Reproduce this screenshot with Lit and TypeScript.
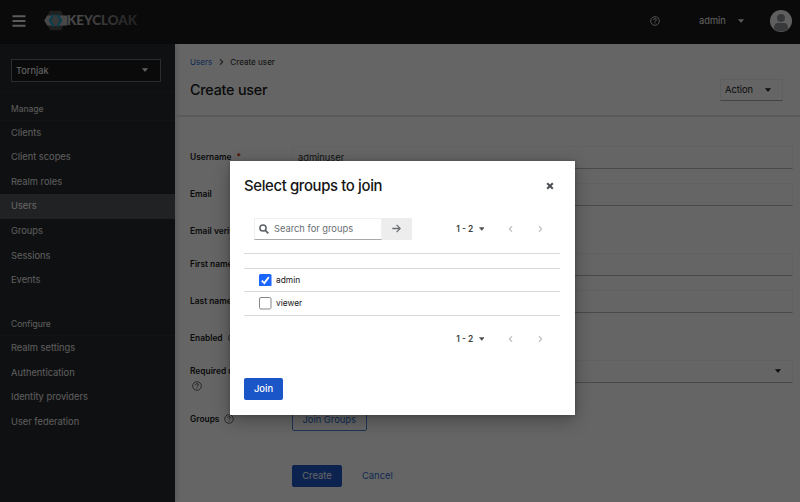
import { LitElement, html, css } from "lit";
import { customElement } from "lit/decorators.js";
import { classMap } from "lit/directives/class-map.js";

const caret = html`<svg class="caret" viewBox="0 0 6 4"><path d="M.4.4h5.2L3 3.5z" fill="currentColor" stroke="currentColor" stroke-width=".5" stroke-linejoin="round"/></svg>`;
const help = html`<svg class="help" viewBox="0 0 10 10" fill="none" stroke="currentColor"><circle cx="5" cy="5" r="4.3" stroke-width=".85"/><path d="M3.6 4.1c0-1 .6-1.5 1.4-1.5s1.4.5 1.4 1.2c0 .9-1.4 1-1.4 1.9M5 6.5v.9" stroke-width=".95"/></svg>`;
const chevron = (d: string) => html`<svg class="chev" viewBox="0 0 5 8" fill="none" stroke="currentColor" stroke-width="1.3"><path d=${d}/></svg>`;
const left = chevron("M4 1.2L1.4 4 4 6.8");
const right = chevron("M1 1.2L3.6 4 1 6.8");

interface Row { label: string; kind: string; h: string; req?: boolean; help?: boolean; value?: string }
const rows: Row[] = [
  { label: "Username", kind: "input", h: "h37", req: true, value: "adminuser" },
  { label: "Email", kind: "input", h: "h37" },
  { label: "Email verified", kind: "none", h: "h33" },
  { label: "First name", kind: "input", h: "h37" },
  { label: "Last name", kind: "input", h: "h37" },
  { label: "Enabled", kind: "none", h: "h33", help: true },
  { label: "Required user actions", kind: "select", h: "h48", help: true },
  { label: "Groups", kind: "join", h: "h56", help: true },
];

@customElement("app-root")
export class AppRoot extends LitElement {
  static styles = css`
    :host { display: block; position: relative; width: 800px; height: 502px; overflow: hidden; font-family: Inter, "Liberation Sans", sans-serif; font-size: 9.3px; color: #151515; background: #fff; }
    * { box-sizing: border-box; }
    svg { display: block; flex: none; }
    .caret { width: 6px; height: 4px; }
    .help { width: 10px; height: 10px; }
    .chev { width: 5px; height: 8px; }
    header { height: 44px; background: #151515; color: #f0f0f0; display: flex; align-items: center; padding: 0 8px 3px 12px; }
    .burger { width: 14px; height: 12px; }
    .logo { width: 96px; height: 22px; margin-left: 17px; }
    .wordmark { font: 900 13px Lato, sans-serif; }
    .tools { margin-left: auto; display: flex; align-items: center; }
    .user { margin: 0 12px 0 39px; width: 27px; }
    .avatar { width: 22px; height: 22px; margin-left: 26px; }
    .account { display: flex; align-items: center; }
    .body { display: flex; height: 458px; }
    nav { width: 175px; background: #212427; color: #e8e8e8; flex: none; box-shadow: 2px 0 5px rgba(3,3,3,.15); }
    .realm { height: 47.5px; padding: 15px 14.5px 0 11px; border-bottom: 1px solid #2b2e31; }
    .picker { height: 22.5px; border: 1px solid #6a6e73; background: #151515; display: flex; align-items: center; justify-content: space-between; padding: 0 11.5px 0 4px; color: #fff; }
    .section { font-size: 8.5px; height: 29px; padding-left: 11px; line-height: 34px; border-bottom: 1px solid #2b2e31; }
    .section.second { height: 43px; line-height: 62px; }
    .item { height: 24.65px; line-height: 24.8px; padding-left: 11px; white-space: nowrap; }
    .item.current { background: #4f5255; color: #fff; }
    main { flex: 1; }
    .top { height: 73px; border-bottom: 2px solid #e2e2e2; padding: 12.5px 17px 0 15px; }
    .crumbs { display: flex; align-items: center; height: 11px; font-size: 8.1px; gap: 6.5px; }
    .crumbs .chev { color: #5a5d60; }
    .link { color: #2468cc; }
    .headline { display: flex; justify-content: space-between; align-items: center; height: 23px; margin-top: 10.5px; }
    h1, h2 { margin: 0; font-weight: 500; white-space: nowrap; letter-spacing: -.2px; }
    h1 { font-size: 14.3px; }
    .action { width: 63px; height: 22px; border: 1px solid #f0f0f0; border-bottom-color: #a5a7a9; display: flex; align-items: center; justify-content: space-between; padding: 0 11px 0 4px; }
    form { padding: 29px 7.5px 0 15px; }
    .row { display: grid; grid-template-columns: 102px 1fr; align-items: start; }
    .h37 { height: 37px; } .h33 { height: 33px; } .h48 { height: 48px; } .h56 { height: 56.5px; }
    .label { font-weight: 600; font-size: 8.4px; line-height: 22px; display: flex; flex-wrap: wrap; column-gap: 5px; white-space: nowrap; }
    .label .help { margin-top: 6px; color: #45484b; }
    .wrapped .help { margin: -1px 0 0 2px; }
    .req { color: #c9190b; }
    .field { height: 22.5px; border: 1px solid #f4f4f4; border-bottom-color: #b4b6b8; display: flex; align-items: center; padding: 0 11px 0 5px; color: #2c2e30; }
    .select { justify-content: flex-end; color: #151515; }
    .btn { display: inline-flex; height: 22.5px; align-items: center; justify-content: center; border-radius: 2px; font-size: 9.4px; }
    .outline { width: 74.5px; border: 1px solid #4a82d8; color: #2468cc; }
    .primary { background: #1b56c8; color: #fff; }
    .create { width: 50px; margin-right: 20px; }
    .submit { padding-left: 102px; display: flex; }
    .backdrop { position: absolute; inset: 0; background: rgba(3,3,3,.61); }
    .modal { position: absolute; left: 229.5px; top: 161px; width: 345.3px; height: 253.5px; background: #fff; padding: 14px 14.5px; box-shadow: 0 5px 16px rgba(3,3,3,.3), 0 0 4px rgba(3,3,3,.2); }
    .mhead { display: flex; height: 22px; align-items: center; justify-content: space-between; }
    h2 { font-size: 14.9px; letter-spacing: -.36px; }
    .close { width: 8px; height: 8px; margin-right: 6px; color: #4a4e52; }
    .toolbar { display: flex; margin-top: 20.5px; padding-left: 10px; height: 22.5px; }
    .search { width: 128px; border: 1px solid #f0f0f0; border-bottom-color: #a8aaac; display: flex; align-items: center; gap: 5px; padding-left: 4px; color: #6a6e73; }
    .glass { width: 10px; height: 10px; color: #5c6064; }
    .go { width: 29.5px; background: #ededed; display: flex; align-items: center; justify-content: center; color: #6a6e73; }
    .arrow { width: 9px; height: 9px; }
    .pager { display: flex; align-items: center; margin-left: auto; padding-right: 17.5px; color: #c4c4c4; }
    .range { font-weight: 600; font-size: 8.4px; color: #3c3f42; width: 22.5px; white-space: nowrap; }
    .pager .caret { color: #4a4e52; margin-right: 24px; width: 5.5px; }
    .next { margin-left: 24.5px; }
    .list { margin-top: 12.5px; border-top: 1px solid #dadada; padding-top: 14px; }
    .group { display: flex; align-items: center; gap: 4.5px; height: 23.5px; border-top: 1px solid #dadada; padding-left: 15px; font-size: 8.4px; }
    .group:last-child { border-bottom: 1px solid #dadada; height: 24.5px; }
    .check { width: 12.5px; height: 12.5px; }
    .bottom { display: flex; height: 22px; margin-top: 12px; }
    .join { width: 39px; margin-top: 28px; font-weight: 500; }
  `;

  private row(r: Row) {
    const control =
      r.kind === "input" ? html`<div class="field">${r.value ?? ""}</div>`
      : r.kind === "select" ? html`<div class="field select">${caret}</div>`
      : r.kind === "join" ? html`<div><span class="btn outline">Join Groups</span></div>` : html`<div></div>`;
    return html`<div class="row ${r.h}">
      <div class=${classMap({ label: true, wrapped: r.kind === "select" })}><span>${r.label}</span>${r.req ? html`<span class="req">*</span>` : ""}${r.help ? help : ""}</div>${control}</div>`;
  }

  private pager() {
    return html`<div class="pager"><span class="range">1 - 2</span>${caret}${left}<span class="next">${right}</span></div>`;
  }

  render() {
    const item = (t: string) => html`<div class=${classMap({ item: true, current: t === "Users" })}>${t}</div>`;
    return html`
      <header>
        <svg class="burger" viewBox="0 0 14 12"><path d="M.5 1.2h13M.5 6h13M.5 10.8h13" stroke="#e4e4e4" stroke-width="1.9"/></svg>
        <svg class="logo" viewBox="0 0 96 22">
          <defs><linearGradient id="word" x1="0" x2="1"><stop offset=".15" stop-color="#b8b8b8"/><stop offset="1" stop-color="#505050"/></linearGradient></defs>
          <path d="M7 .8h11l5 9.700-5 9.700H7L2 10.500z" fill="#4d4d4d"/>
          <path d="M4.200 5.500H24.500v10H4.200L1.200 10.500z" fill="#b4b4b4"/>
          <path d="M10.500 5h4l3.500 5.500-3.500 5.500h-4L7 10.500z" fill="#8c8c8c"/>
          <path d="M10.600 4.500L7 10.500l3.600 6M14.400 4.500L18 10.500l-3.600 6" fill="none" stroke="#1795bd" stroke-width="2.300"/>
          <text class="wordmark" x="24" y="15.400" textLength="70" lengthAdjust="spacingAndGlyphs" fill="url(#word)">KEYCLOAK</text>
        </svg>
        <div class="tools">${help}
          <div class="account"><span class="user">admin</span>${caret}</div>
          <svg class="avatar" viewBox="0 0 22 22"><circle cx="11" cy="11" r="11" fill="#f0f0f0"/><circle cx="11" cy="8" r="4" fill="#8a8d90"/><path d="M4 19c-.2-4 1.500-6 4-6h6c2.500 0 4.200 2 4 6a11 11 0 0 1-14 0z" fill="#8a8d90"/></svg>
        </div>
      </header>
      <div class="body">
        <nav>
          <div class="realm"><div class="picker"><span>Tornjak</span>${caret}</div></div>
          <div class="section">Manage</div>
          ${["Clients", "Client scopes", "Realm roles", "Users", "Groups", "Sessions", "Events"].map(item)}
          <div class="section second">Configure</div>
          ${["Realm settings", "Authentication", "Identity providers", "User federation"].map(item)}
        </nav>
        <main>
          <div class="top">
            <div class="crumbs"><span class="link">Users</span>${right}<span>Create user</span></div>
            <div class="headline"><h1>Create user</h1><div class="action"><span>Action</span>${caret}</div></div>
          </div>
          <form>${rows.map((r) => this.row(r))}
            <div class="submit"><span class="btn primary create">Create</span><span class="btn link">Cancel</span></div>
          </form>
        </main>
      </div>
      <div class="backdrop"></div>
      <section class="modal">
        <div class="mhead"><h2>Select groups to join</h2>
          <svg class="close" viewBox="0 0 8 8"><path d="M1.200 1.200l5.600 5.600M6.800 1.200L1.200 6.800" stroke="currentColor" stroke-width="2"/></svg></div>
        <div class="toolbar">
          <div class="search"><svg class="glass" viewBox="0 0 10 10" fill="none" stroke="currentColor"><circle cx="4" cy="4" r="3.100" stroke-width="1.500"/><path d="M6.300 6.300l3 3" stroke-width="1.700"/></svg><span>Search for groups</span></div>
          <div class="go"><svg class="arrow" viewBox="0 0 9 9" fill="none" stroke="currentColor" stroke-width="1.300"><path d="M.3 4.500h7.700M4.600.9l3.600 3.600-3.600 3.600"/></svg></div>
          ${this.pager()}
        </div>
        <div class="list">
          <div class="group"><svg class="check" viewBox="0 0 12.500 12.500"><rect width="12.500" height="12.500" rx="1.500" fill="#1a66ff"/><path d="M2.800 6.600l2.500 2.500 4.500-6" fill="none" stroke="#fff" stroke-width="1.800"/></svg><span>admin</span></div>
          <div class="group"><svg class="check" viewBox="0 0 12.500 12.500"><rect x=".5" y=".5" width="11.500" height="11.500" rx="1.500" fill="#fff" stroke="#858585"/></svg><span>viewer</span></div>
        </div>
        <div class="bottom">${this.pager()}</div>
        <span class="btn primary join">Join</span>
      </section>`;
  }
}
